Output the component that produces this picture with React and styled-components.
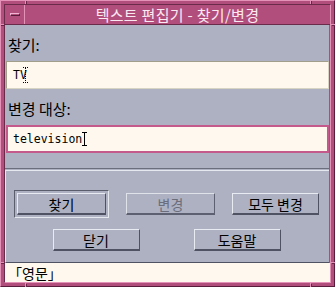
import React from 'react';
import styled, { createGlobalStyle } from 'styled-components';

const Global = createGlobalStyle`
  html, body { margin: 0; padding: 0; background: #b24e7c; }
  body { font-family: "Noto Sans CJK KR", sans-serif; }
  * { box-sizing: border-box; }
`;

const Window = styled.div`
  position: relative;
  width: 335px;
  height: 287px;
  background: #b24e7c;
  border: 1px solid;
  border-color: #e592b9 #5a1d3b #5a1d3b #e592b9;
  padding: 3px;
  display: flex;
`;

const Mark = styled.span`
  position: absolute;
  background: #e592b9;
  box-shadow: 1px 1px 0 #6a2548;
  ${p => p.$side === 'top' && `top: -1px; left: ${p.$at}px; width: 1px; height: 4px;`}
  ${p => p.$side === 'bottom' && `bottom: -1px; left: ${p.$at}px; width: 1px; height: 4px;`}
  ${p => p.$side === 'left' && `left: -1px; top: ${p.$at}px; width: 4px; height: 1px;`}
  ${p => p.$side === 'right' && `right: -1px; top: ${p.$at}px; width: 4px; height: 1px;`}
`;

const Inner = styled.div`
  flex: 1;
  min-width: 0;
  display: flex;
  flex-direction: column;
  border: 1px solid;
  border-color: #6a2a4a #e592b9 #e592b9 #6a2a4a;
`;

const TitleBar = styled.div`
  height: 20px;
  display: flex;
  background: #b24e7c;
  border-bottom: 1px solid #6a2a4a;
`;

const MenuButton = styled.div`
  width: 20px;
  height: 19px;
  display: flex;
  align-items: center;
  justify-content: center;
  border-right: 1px solid #e592b9;
`;

const Dash = styled.span`
  width: 10px;
  height: 3px;
  border: 1px solid;
  border-color: #f2b3d2 #5a1d3b #5a1d3b #f2b3d2;
  background: #b24e7c;
`;

const Title = styled.div`
  flex: 1;
  text-align: center;
  color: #fbe9f2;
  font-size: 15px;
  line-height: 19px;
  letter-spacing: 0.3px;
`;

const Body = styled.div`
  height: 238px;
  display: flex;
  flex-direction: column;
  background: #adb1c2;
  border-right: 1px solid #6b6e7d;
`;

const Upper = styled.div`
  display: flex;
  flex-direction: column;
  padding: 0 0 15px 1px;
  border-bottom: 1px solid #6b6e7d;
`;

const Label = styled.div`
  height: 36px;
  display: flex;
  align-items: center;
  padding: 3px 0 0 2px;
  font-size: 15px;
  color: #000;
`;

const Field = styled.div`
  height: 28px;
  display: flex;
  align-items: center;
  padding-left: ${p => (p.$focused ? 5 : 6)}px;
  background: #fff8ee;
  border: ${p => (p.$focused ? '2px solid #c4598b' : '1px solid')};
  border-color: ${p => (p.$focused ? '#c4598b' : '#a29e8c #d8d4c4 #d8d4c4 #a29e8c')};
  font-family: "DejaVu Sans Mono", monospace;
  font-size: 11.5px;
  color: #000;
`;

const Caret = styled.span`
  position: relative;
  display: inline-block;
  width: 5px;
  height: ${p => (p.$dotted ? 16 : 14)}px;
  margin-left: ${p => (p.$dotted ? -4 : 0)}px;
  &::before {
    content: '';
    position: absolute;
    left: 2px;
    top: 0;
    bottom: 0;
    border-left: 1px ${p => (p.$dotted ? 'dotted' : 'solid')} #000;
  }
  &::after {
    content: '';
    position: absolute;
    left: 0;
    right: 0;
    top: 0;
    bottom: 0;
    border-top: 1px ${p => (p.$dotted ? 'dotted' : 'solid')} #000;
    border-bottom: 1px ${p => (p.$dotted ? 'dotted' : 'solid')} #000;
  }
`;

const ButtonArea = styled.div`
  margin-top: 1px;
  flex: 1;
  display: flex;
  flex-direction: column;
  gap: 11px;
  padding: 19px 10px 11px 8px;
  border-top: 1px solid #e6e8f0;
  border-left: 1px solid #e6e8f0;
  border-bottom: 1px solid #4f5262;
`;

const Row = styled.div`
  display: flex;
  align-items: center;
  justify-content: ${p => (p.$center ? 'center' : 'space-between')};
  gap: ${p => (p.$center ? '54px' : '0')};
`;

const Ring = styled.div`
  width: 95px;
  height: 28px;
  padding: 1px;
  border: 1px solid;
  border-color: #5a5d6c #e6e8f0 #e6e8f0 #5a5d6c;
  display: flex;
`;

const Button = styled.button`
  width: ${p => p.$w}px;
  height: 22px;
  margin: ${p => (p.$inRing ? '1px' : '0')};
  padding: 0;
  background: #adb1c2;
  border-style: solid;
  border-width: 1px 1px 2px 1px;
  border-color: #e9ebf2 #4f5262 #4f5262 #e9ebf2;
  font-family: "Noto Sans CJK KR", sans-serif;
  font-size: 14px;
  line-height: 18px;
  color: ${p => (p.disabled ? '#5f6270' : '#000')};
  ${p => p.disabled && 'opacity: 0.85;'}
`;

const StatusBar = styled.div`
  height: 19px;
  display: flex;
  align-items: center;
  padding-left: 3px;
  background: #fff8ee;
  font-size: 14px;
  color: #000;
`;

export default function App() {
  return (
    <>
      <Global />
      <Window>
        <Mark $side="top" $at={24} />
        <Mark $side="top" $at={309} />
        <Mark $side="bottom" $at={24} />
        <Mark $side="bottom" $at={309} />
        <Mark $side="left" $at={23} />
        <Mark $side="left" $at={261} />
        <Mark $side="right" $at={23} />
        <Mark $side="right" $at={261} />
        <Inner>
          <TitleBar>
            <MenuButton><Dash /></MenuButton>
            <Title>텍스트 편집기 - 찾기/변경</Title>
          </TitleBar>
          <Body>
            <Upper>
              <Label>찾기:</Label>
              <Field>TV<Caret $dotted /></Field>
              <Label>변경 대상:</Label>
              <Field $focused>television<Caret /></Field>
            </Upper>
            <ButtonArea>
              <Row>
                <Ring><Button $w={89} $inRing>찾기</Button></Ring>
                <Button $w={89} disabled>변경</Button>
                <Button $w={87}>모두 변경</Button>
              </Row>
              <Row $center>
                <Button $w={87}>닫기</Button>
                <Button $w={87}>도움말</Button>
              </Row>
            </ButtonArea>
          </Body>
          <StatusBar>「영문」</StatusBar>
        </Inner>
      </Window>
    </>
  );
}
